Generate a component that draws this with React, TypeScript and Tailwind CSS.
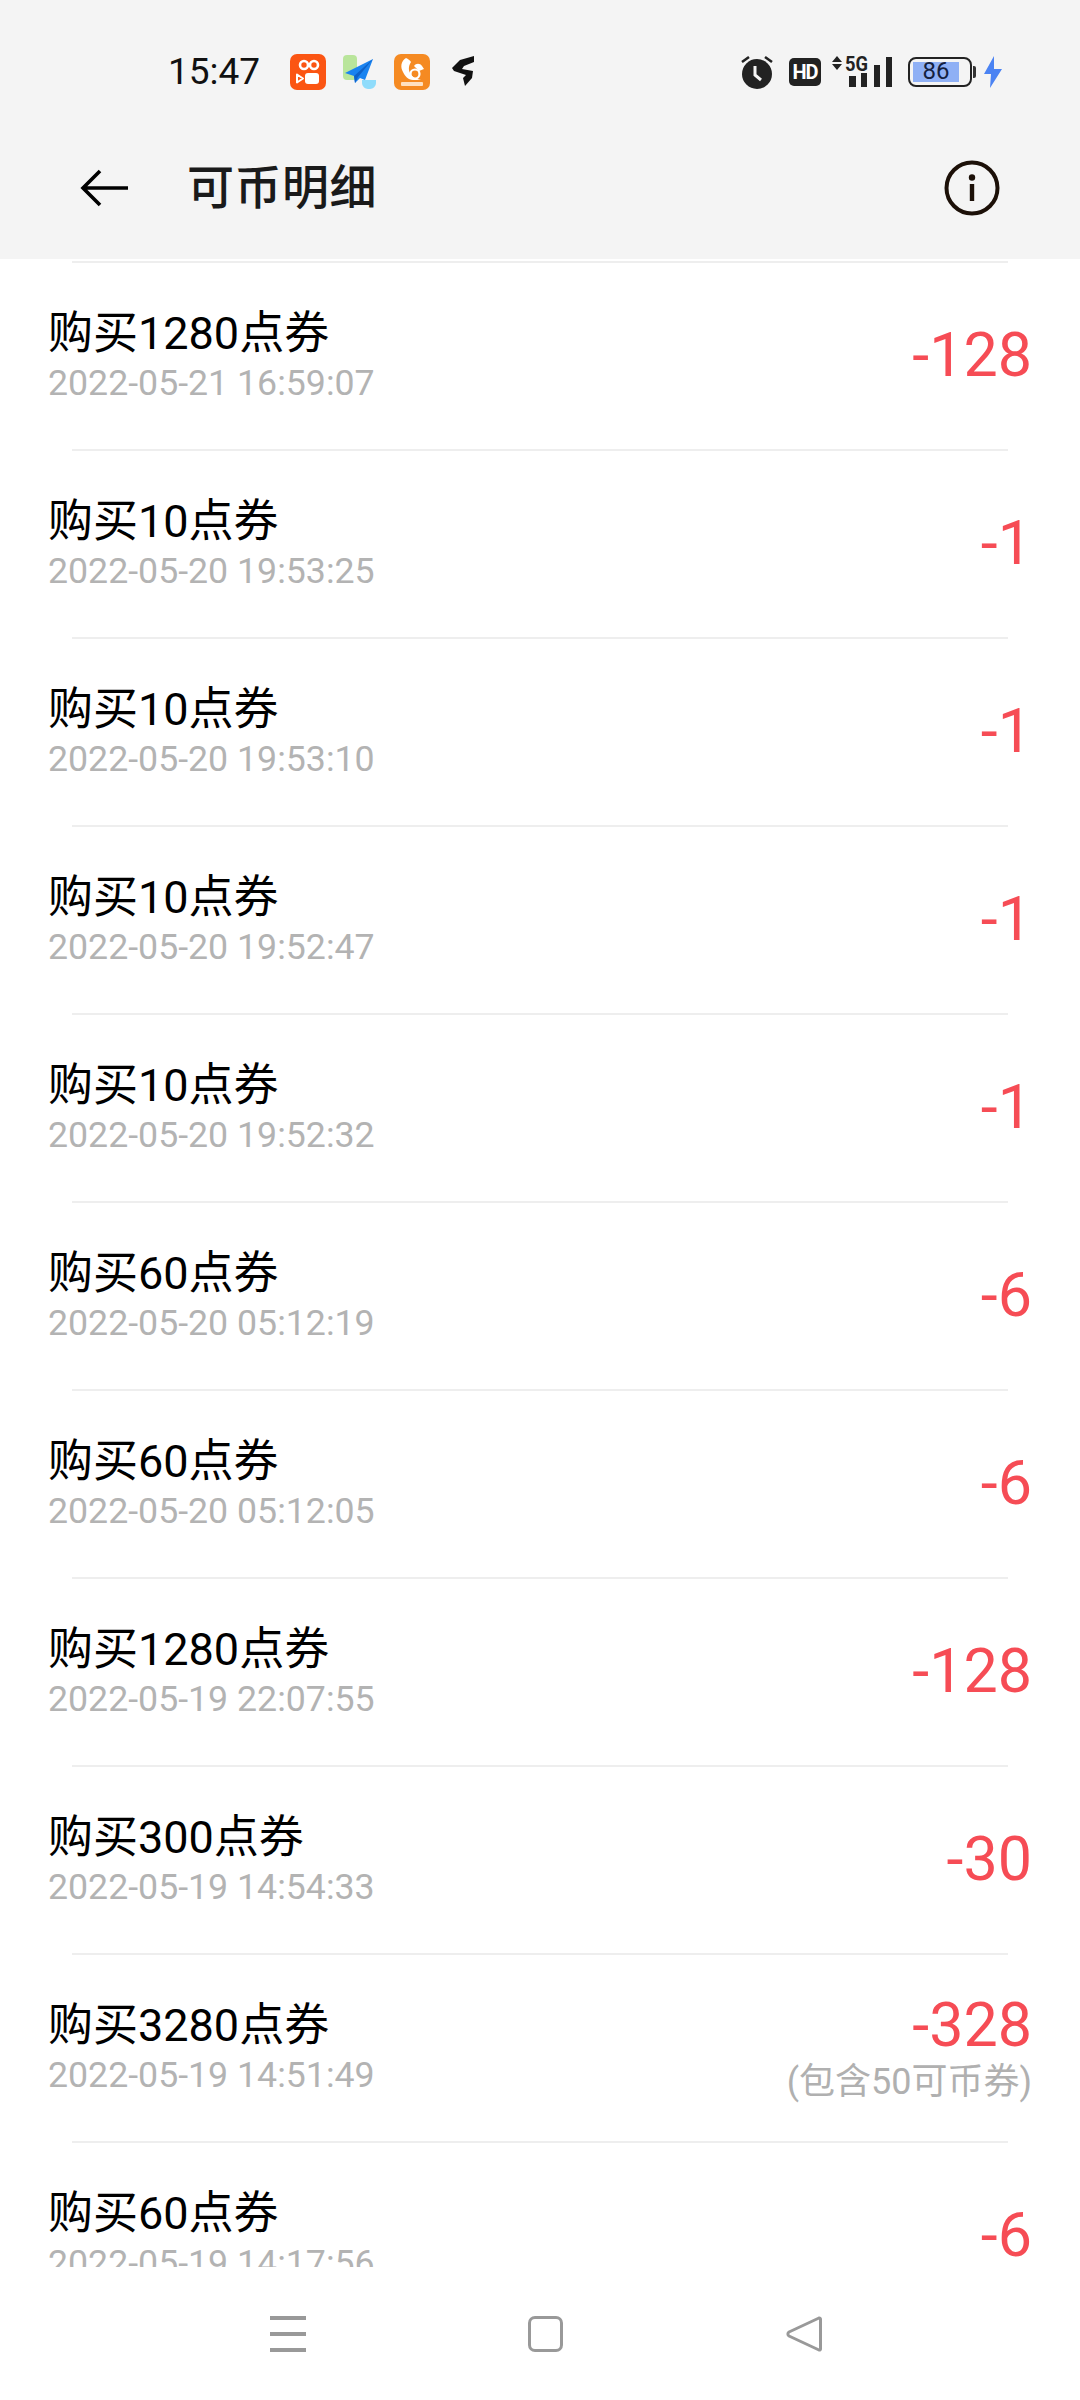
const records = [
  { title: '购买1280点券', time: '2022-05-21 16:59:07', amount: '-128' },
  { title: '购买10点券', time: '2022-05-20 19:53:25', amount: '-1' },
  { title: '购买10点券', time: '2022-05-20 19:53:10', amount: '-1' },
  { title: '购买10点券', time: '2022-05-20 19:52:47', amount: '-1' },
  { title: '购买10点券', time: '2022-05-20 19:52:32', amount: '-1' },
  { title: '购买60点券', time: '2022-05-20 05:12:19', amount: '-6' },
  { title: '购买60点券', time: '2022-05-20 05:12:05', amount: '-6' },
  { title: '购买1280点券', time: '2022-05-19 22:07:55', amount: '-128' },
  { title: '购买300点券', time: '2022-05-19 14:54:33', amount: '-30' },
  { title: '购买3280点券', time: '2022-05-19 14:51:49', amount: '-328', note: '(包含50可币券)' },
  { title: '购买60点券', time: '2022-05-19 14:17:56', amount: '-6' },
];

function AppIcons() {
  return (
    <div className="flex items-center ml-[30px]">
      <svg width="36" height="36" viewBox="0 0 36 36">
        <rect width="36" height="36" rx="7" fill="#fb5513" />
        <circle cx="14" cy="11" r="4" fill="none" stroke="#fff" strokeWidth="2.6" />
        <circle cx="24" cy="11" r="4" fill="none" stroke="#fff" strokeWidth="2.6" />
        <rect x="15" y="19" width="14" height="11" rx="3" fill="#fff" />
        <path d="M7 20.500l6 4-6 4z" fill="none" stroke="#fff" strokeWidth="2" strokeLinejoin="round" />
      </svg>
      <svg width="36" height="36" viewBox="0 0 36 36" className="ml-[16px]">
        <rect x="1" y="1" width="14" height="25" rx="4" fill="#b9e59b" />
        <path d="M20 26h14v3c0 3-3 6-6 6h-2c-3 0-6-3-6-6z" fill="#8fdcfb" />
        <path d="M31 5L3 19l9 3 1 7 5-5 5 2z" fill="#1a83f0" />
        <path d="M31 5L12 22l1 7 3-6z" fill="#0f62c8" />
      </svg>
      <svg width="36" height="36" viewBox="0 0 36 36" className="ml-[16px]">
        <rect width="36" height="36" rx="7" fill="#f58a22" />
        <path d="M12 4c-5 3-6 9-3 14 2 4 5 8 10 8h8c-5-1-9-3-11-7-2-4-1-8 1-11-1-2-3-3-5-4z" fill="#fff" />
        <circle cx="21" cy="20" r="4.500" fill="none" stroke="#fff" strokeWidth="2.200" />
        <path d="M20 12c2-3 6-3 8 0l2 3-5 2z" fill="#fff" />
        <rect x="7" y="28" width="22" height="4" rx="1" fill="#ffe0c0" />
      </svg>
      <svg width="24" height="32" viewBox="0 0 24 32" className="ml-[22px]">
        <path d="M8 4L22 0v6l-10 4-2 3 11 2-1 7-7 8-2-8 3-3-12-4-2-3z" fill="#111" />
      </svg>
    </div>
  );
}

function StatusIcons() {
  return (
    <div className="flex items-center">
      <svg width="34" height="34" viewBox="0 0 34 34">
        <path d="M2 7l7-5M32 7l-7-5" stroke="#222" strokeWidth="2.600" />
        <circle cx="17" cy="19" r="15" fill="#222" />
        <path d="M15 11v9l6 5" fill="none" stroke="#f4f4f4" strokeWidth="3" />
      </svg>
      <div className="ml-[15px] w-[32px] h-[28px] rounded-[5px] bg-[#222] text-white text-[20px] leading-[28px] font-bold text-center tracking-[-1px]">
        HD
      </div>
      <svg width="62" height="38" viewBox="0 -6 62 38" className="ml-[11px] mt-[-6px]">
        <path d="M0 6l5-6 5 6zM0 8h10l-5 6z" fill="#222" />
        <text x="13" y="15" fontSize="21" fontWeight="700" fill="#222" fontFamily="Roboto, sans-serif" textLength="23" lengthAdjust="spacingAndGlyphs">5G</text>
        <rect x="17" y="20" width="7" height="11" fill="#222" />
        <rect x="29" y="17" width="6" height="14" fill="#222" />
        <rect x="42" y="9" width="6" height="22" fill="#222" />
        <rect x="54" y="1" width="6" height="30" fill="#222" />
      </svg>
      <div className="ml-[14px] flex items-center">
        <div className="w-[64px] h-[30px] rounded-[8px] border-[2.5px] border-[#222] p-[3px] flex">
          <div className="w-[46px] h-full bg-[#8fb0f5] text-[#14213f] text-[24px] leading-[18px] text-center">86</div>
        </div>
        <div className="ml-[1px] w-[3px] h-[12px] rounded-r-[2px] bg-[#333]" />
      </div>
      <svg width="20" height="32" viewBox="0 0 20 32" className="ml-[7px]">
        <path d="M11 0L1 18h7l-1 14 12-19h-8z" fill="#4b83f3" />
      </svg>
    </div>
  );
}

export default function App() {
  return (
    <div className="w-[1080px] h-[2400px] bg-white flex flex-col overflow-hidden font-['Roboto','Noto_Sans_CJK_SC',sans-serif]">
      <div className="h-[259px] bg-[#f4f4f4] shrink-0">
        <div className="h-[96px] pt-[48px] pl-[168px] pr-[77px] flex items-center justify-between">
          <div className="flex items-center">
            <span className="text-[37px] leading-[42px] text-[#111]">15:47</span>
            <AppIcons />
          </div>
          <StatusIcons />
        </div>
        <div className="h-[163px] pt-[20px] pl-[80px] pr-[80px] flex items-center">
          <svg width="50" height="40" viewBox="0 0 50 40">
            <path d="M48 20H3M20 3L3 20l17 17" fill="none" stroke="#000" strokeWidth="3.600" />
          </svg>
          <h1 className="ml-[57px] text-[47px] leading-[56px] font-medium text-[#1a1a1a] tracking-[0.5px]">可币明细</h1>
          <svg width="56" height="56" viewBox="0 0 56 56" className="ml-auto">
            <circle cx="28" cy="28" r="25.500" fill="none" stroke="#1c1008" strokeWidth="4" />
            <circle cx="28" cy="17.500" r="3.200" fill="#1c1008" />
            <rect x="25.800" y="24" width="4.400" height="17" fill="#1c1008" />
          </svg>
        </div>
      </div>

      <div className="h-[2008px] overflow-hidden shrink-0 pt-[2px]">
        {records.map((r, i) => (
          <div key={i} className="relative h-[188px] pl-[48px] pr-[48px] flex items-center justify-between">
            <div className="absolute top-0 left-[72px] right-[72px] h-[2px] bg-[#eeeeee]" />
            <div className="mt-[3px]">
              <div className="text-[45px] leading-[52px] text-black">{r.title}</div>
              <div className="text-[35.7px] leading-[46px] text-[#b3b3b3]">{r.time}</div>
            </div>
            <div className="text-right">
              <div className="text-[61px] leading-[70px] text-[#f64c55]">{r.amount}</div>
              {r.note && <div className="text-[36px] leading-[44px] text-[#b0b0b0]">{r.note}</div>}
            </div>
          </div>
        ))}
      </div>

      <div className="flex-1 bg-white pt-[49px] pl-[270px] flex items-start">
        <div className="w-[36px] h-[36px] flex flex-col justify-between">
          <div className="h-[4px] bg-[#999]" />
          <div className="h-[4px] bg-[#999]" />
          <div className="h-[4px] bg-[#999]" />
        </div>
        <div className="ml-[222px] w-[35px] h-[36px] rounded-[7px] border-[3px] border-[#999]" />
        <svg width="36" height="36" viewBox="0 0 36 36" className="ml-[223px]">
          <path d="M33 2L3 16c-1.500 1-1.500 3 0 4l30 14c1 .3 1.500-.5 1.500-1V3c0-.7-.7-1.300-1.500-1z" fill="none" stroke="#999" strokeWidth="3" strokeLinejoin="round" />
        </svg>
      </div>
    </div>
  );
}
